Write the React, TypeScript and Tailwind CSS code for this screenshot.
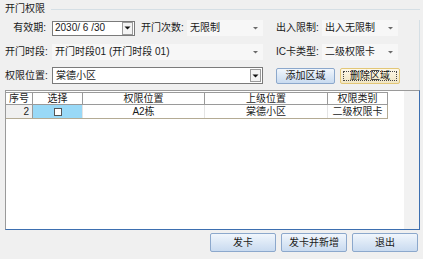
import React from 'react';

const font = "font-['Liberation_Sans','Noto_Sans_CJK_SC',sans-serif]";

const Arrow: React.FC = () => (
  <svg width="7" height="4" viewBox="0 0 7 4" className="shrink-0">
    <path d="M1 1h5L3.5 3.5z" fill="#6b6b6b" />
  </svg>
);

const FlatSelect: React.FC<{ value: string; width: string }> = ({ value, width }) => (
  <div className={`${width} h-full bg-[#f7f7f7] flex items-center pl-[3px] pr-[4px]`}>
    <span className="flex-1 whitespace-nowrap">{value}</span>
    <Arrow />
  </div>
);

const DropButton: React.FC = () => (
  <div className="w-[11px] h-[13px] border border-[#9a9a9a] bg-[#f4f4f4] flex items-center justify-center">
    <svg width="7" height="4" viewBox="0 0 7 4">
      <path d="M0.5 0.5h6L3.5 3.5z" fill="#111" />
    </svg>
  </div>
);

const BlueButton: React.FC<{ label: string; width: string }> = ({ label, width }) => (
  <button className={`${width} h-full rounded-[2px] border border-[#8ca8cc] bg-gradient-to-b from-[#f1f6fc] via-[#dce8f6] to-[#c9dbf0] flex items-center justify-center`}>
    {label}
  </button>
);

export default function App() {
  return (
    <div className={`w-[423px] h-[259px] bg-[#f0f0f0] overflow-hidden text-[10px] text-[#1a1a1a] leading-none ${font}`}>
      {/* group header */}
      <div className="h-[18px] flex items-center">
        <span className="ml-[5px]">开门权限</span>
        <div className="flex-1 h-px bg-[#d5dfe5] ml-[6px] mr-[3px]" />
      </div>

      <div className="mr-[3px] border-r border-[#d5dfe5] pb-[6px]">
        {/* row 1 */}
        <div className="mt-[2px] h-[16px] flex items-center">
          <span className="ml-[5px] w-[41px] text-right">有效期:</span>
          <div className="ml-[6px] w-[83px] h-[15px] bg-white border border-[#7a7a7a] flex items-center pl-[2px] pr-[1px]">
            <span className="flex-1 whitespace-nowrap">2030/ 6 /30</span>
            <DropButton />
          </div>
          <span className="ml-[6px] w-[46px] whitespace-nowrap">开门次数:</span>
          <FlatSelect value="无限制" width="w-[76px]" />
          <span className="ml-[13px] w-[46px] whitespace-nowrap">出入限制:</span>
          <FlatSelect value="出入无限制" width="w-[76px]" />
        </div>

        {/* row 2 */}
        <div className="mt-[8px] h-[16px] flex items-center">
          <span className="ml-[5px] w-[41px] text-right whitespace-nowrap">开门时段:</span>
          <div className="ml-[6px] h-full">
            <FlatSelect value="开门时段01 (开门时段 01)" width="w-[211px]" />
          </div>
          <span className="ml-[13px] w-[46px] whitespace-nowrap">IC卡类型:</span>
          <FlatSelect value="二级权限卡" width="w-[76px]" />
        </div>

        {/* row 3 */}
        <div className="mt-[7px] h-[17px] flex items-center">
          <span className="ml-[5px] w-[41px] text-right whitespace-nowrap">权限位置:</span>
          <div className="ml-[6px] w-[211px] h-[17px] bg-white border border-[#7a7a7a] flex items-center pl-[3px] pr-[1px]">
            <span className="flex-1 whitespace-nowrap">棠德小区</span>
            <DropButton />
          </div>
          <div className="ml-[13px] h-[16px] flex gap-[5px]">
            <BlueButton label="添加区域" width="w-[59px]" />
            <button className="w-[60px] h-full rounded-[2px] border border-[#e3c777] bg-gradient-to-b from-[#fdf8e8] to-[#f1e6c4] p-[2px]">
              <span className="w-full h-full border border-dotted border-[#444] flex items-center justify-center">删除区域</span>
            </button>
          </div>
        </div>
      </div>

      {/* list */}
      <div className="ml-[5px] w-[415px] h-[140px] bg-white border-l border-t border-[#9a9a9a] border-r border-b border-r-[#3d6fb0] border-b-[#3d6fb0] flex">
        <div className="flex-1">
          <div className="mt-[1px] w-[382px] grid grid-cols-[27px_50px_122px_123px_60px] border-b border-[#b4ab94]">
            {['序号', '选择', '权限位置', '上级位置', '权限类别'].map((h, i) => (
              <div
                key={h}
                className={`h-[13px] flex items-center justify-center bg-white border-t border-b border-r border-[#9a9a9a] ${i === 0 ? 'border-l-0' : ''}`}
              >
                {h}
              </div>
            ))}
            <div className="h-[13px] bg-[#f0f0f0] border-r border-[#9a9a9a] flex items-center justify-end pr-[3px]">2</div>
            <div className="h-[13px] bg-[#99d9f7] border-r border-[#e4e4e4] flex items-center justify-center">
              <span className="w-[8px] h-[8px] bg-white border border-[#555]" />
            </div>
            <div className="h-[13px] border-r border-[#e4e4e4] flex items-center justify-center">A2栋</div>
            <div className="h-[13px] border-r border-[#e4e4e4] flex items-center justify-center">棠德小区</div>
            <div className="h-[13px] border-r border-[#b4ab94] flex items-center justify-center">二级权限卡</div>
          </div>
        </div>
        <div className="w-[15px] bg-[#f2f2f2]" />
      </div>

      {/* bottom buttons */}
      <div className="mt-[3px] h-[19px] flex justify-end gap-[5px] pr-[5px]">
        <BlueButton label="发卡" width="w-[66px]" />
        <BlueButton label="发卡并新增" width="w-[66px]" />
        <BlueButton label="退出" width="w-[66px]" />
      </div>
    </div>
  );
}
